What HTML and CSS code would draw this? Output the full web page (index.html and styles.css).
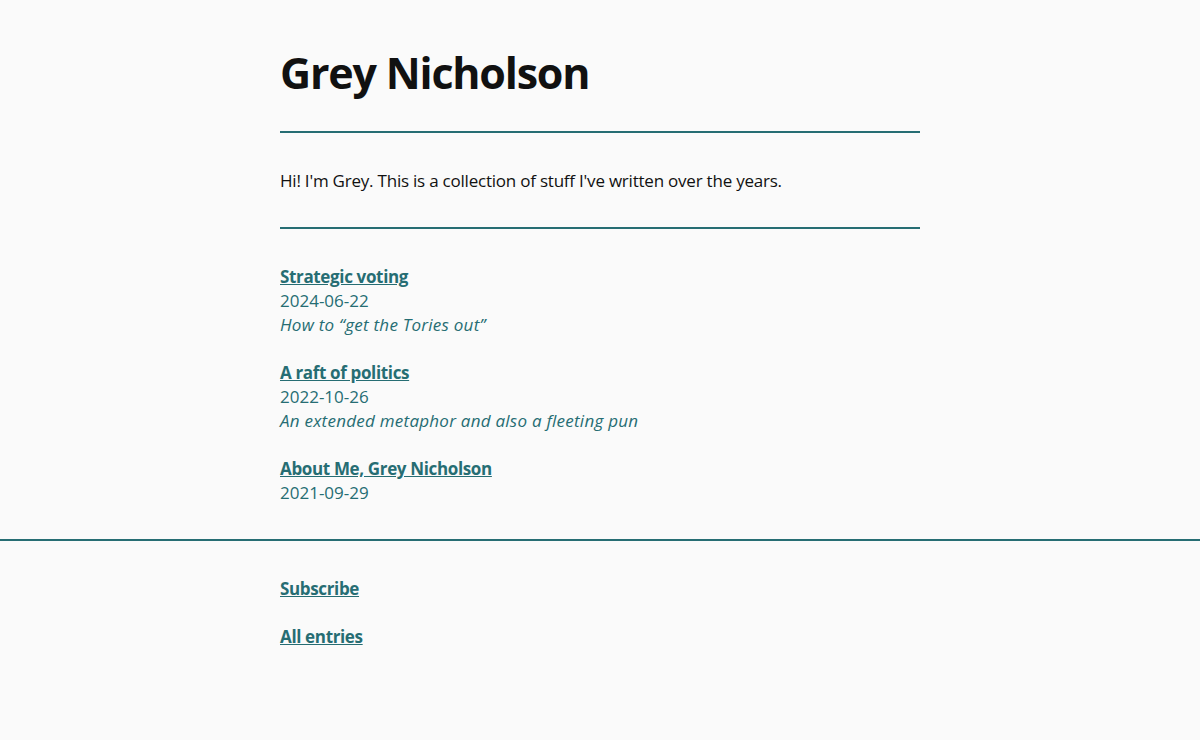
FILE: index.html
```html
<!DOCTYPE html>
<html lang="en">
<head>
<meta charset="utf-8">
<title>Grey Nicholson</title>
<link rel="stylesheet" href="styles.css">
</head>
<body>
<header class="wrap">
  <h1 class="title">Grey Nicholson</h1>
  <p class="intro">Hi! I'm Grey. This is a collection of stuff I've written over the years.</p>
</header>
<main class="wrap">
  <ul class="entries">
    <li class="entry">
      <a class="entry-link" href="#">Strategic voting</a>
      <span class="entry-date">2024-06-22</span>
      <span class="entry-desc">How to “get the Tories out”</span>
    </li>
    <li class="entry">
      <a class="entry-link" href="#">A raft of politics</a>
      <span class="entry-date">2022-10-26</span>
      <span class="entry-desc">An extended metaphor and also a fleeting pun</span>
    </li>
    <li class="entry">
      <a class="entry-link" href="#">About Me, Grey Nicholson</a>
      <span class="entry-date">2021-09-29</span>
    </li>
  </ul>
</main>
<footer class="footer">
  <div class="wrap footer-links">
    <a class="entry-link" href="#">Subscribe</a>
    <a class="entry-link" href="#">All entries</a>
  </div>
</footer>
</body>
</html>
```
FILE: styles.css
```css
html, body {
  margin: 0;
  padding: 0;
}
body {
  background: #fafafa;
  color: #111;
  font-family: "Open Sans", "Noto Sans", sans-serif;
  font-size: 17px;
  line-height: 24px;
}
.wrap {
  width: 640px;
  margin: 0 auto;
}
.title {
  margin: 0;
  padding-top: 45px;
  padding-bottom: 30px;
  font-size: 43px;
  line-height: 56px;
  font-weight: 700;
  letter-spacing: -1.2px;
  border-bottom: 2px solid #266d73;
}
.intro {
  margin: 0;
  padding: 36px 0 34px;
  letter-spacing: -0.22px;
  border-bottom: 2px solid #266d73;
}
.entries {
  list-style: none;
  margin: 0;
  padding: 36px 0 34px;
  display: flex;
  flex-direction: column;
  gap: 24px;
}
.entry {
  display: flex;
  flex-direction: column;
  color: #266d73;
}
.entry-link {
  color: #266d73;
  font-weight: 700;
  letter-spacing: -0.35px;
  text-decoration: underline;
}
.entry-desc {
  font-style: italic;
  letter-spacing: 0.25px;
}
.footer {
  border-top: 2px solid #266d73;
}
.footer-links {
  display: flex;
  flex-direction: column;
  align-items: flex-start;
  gap: 24px;
  padding: 36px 0;
}
```
